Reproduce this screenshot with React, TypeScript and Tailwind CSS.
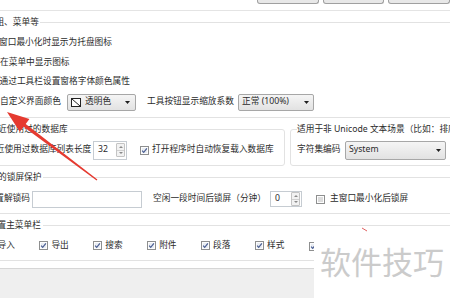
import React from "react";

function Arrow() {
  return (
    <svg width="5" height="3" viewBox="0 0 5 3" className="shrink-0">
      <polygon points="0,0 5,0 2.5,3" fill="#1f1f1f" />
    </svg>
  );
}

function CheckBox({ checked }: { checked?: boolean }) {
  return (
    <svg width="9" height="9" viewBox="0 0 9 9" className="shrink-0">
      <rect x="0.5" y="0.5" width="8" height="8" fill="#fdfdfd" stroke="#8e8f8f" />
      <rect x="2" y="2" width="5" height="5" fill={checked ? "#e9edf3" : "#dcdcdc"} />
      {checked && (
        <path d="M2.1 4.6 L3.7 6.4 L6.9 2.3" fill="none" stroke="#4a5e92" strokeWidth="1.2" />
      )}
    </svg>
  );
}

function Spinner() {
  return (
    <div className="flex flex-col w-[9px] h-[14px] border border-[#c4c4c4] bg-[#f2f2f2] rounded-[1px]">
      <div className="flex-1 flex items-center justify-center border-b border-[#d0d0d0]">
        <svg width="4" height="2" viewBox="0 0 4 2">
          <polygon points="0,2 4,2 2,0" fill="#8a8a8a" />
        </svg>
      </div>
      <div className="flex-1 flex items-center justify-center">
        <svg width="4" height="2" viewBox="0 0 4 2">
          <polygon points="0,0 4,0 2,2" fill="#8a8a8a" />
        </svg>
      </div>
    </div>
  );
}

const combo =
  "flex items-center shrink-0 border border-[#a7a7a7] rounded-[2px] bg-gradient-to-b from-[#f5f5f5] to-[#e2e2e2]";

const menuItems = ["导入", "导出", "搜索", "附件", "段落", "样式"];

export default function App() {
  return (
    <div className="relative w-[450px] h-[298px] overflow-hidden bg-white text-[#2b2b2b] text-[8.7px] font-['Noto_Sans','Noto_Sans_CJK_SC',sans-serif] flex flex-col">
      {/* buttons of the section above */}
      <div className="h-[11px] shrink-0 border-b border-[#e4e4e4] flex gap-[4px] pl-[257px]">
        <div className="w-[85px] h-[4px] border border-t-0 border-[#a0a0a0] rounded-b-[3px] bg-[#e8e8e8]" />
        <div className="w-[85px] h-[4px] border border-t-0 border-[#a0a0a0] rounded-b-[3px] bg-[#e8e8e8]" />
        <div className="w-[85px] h-[4px] border border-t-0 border-[#a0a0a0] rounded-b-[3px] bg-[#e8e8e8]" />
      </div>

      {/* group 1 */}
      <fieldset className="mt-[5px] -ml-[20px] w-[500px] shrink-0 border border-[#e2e2e2] rounded-[3px] pt-[5px] pb-[5px]">
        <legend className="ml-[14.4px] pr-[1px] leading-[12px] whitespace-nowrap">组、菜单等</legend>
        <div className="h-[20px] flex items-center pl-[18px] whitespace-nowrap">窗口最小化时显示为托盘图标</div>
        <div className="h-[19px] flex items-center pl-[19px] whitespace-nowrap">在菜单中显示图标</div>
        <div className="h-[20px] flex items-center pl-[18.5px] whitespace-nowrap">通过工具栏设置窗格字体颜色属性</div>
        <div className="h-[20px] flex items-center pl-[19px] whitespace-nowrap">
          <span className="w-[67px] shrink-0">自定义界面颜色</span>
          <div className={`${combo} w-[69px] h-[17px] pl-[3px] pr-[5px]`}>
            <svg width="10" height="9" viewBox="0 0 10 9" className="shrink-0">
              <rect x="0.5" y="0.5" width="9" height="8" fill="#ffffff" stroke="#222" />
              <line x1="1" y1="1" x2="9" y2="8" stroke="#222" />
            </svg>
            <span className="ml-[4px] flex-1">透明色</span>
            <Arrow />
          </div>
          <span className="ml-[11px] w-[91px] shrink-0">工具按钮显示缩放系数</span>
          <div className={`${combo} w-[76px] h-[17px] pl-[3px] pr-[4px]`}>
            <span className="flex-1">正常 (100%)</span>
            <Arrow />
          </div>
        </div>
      </fieldset>

      {/* group 2 */}
      <div className="mt-[5px] flex shrink-0">
        <fieldset className="-ml-[20px] w-[305px] shrink-0 border border-[#e2e2e2] rounded-[3px] pt-[5px] pb-[5px]">
          <legend className="ml-[8.4px] pr-[2px] leading-[12px] whitespace-nowrap">最近使用过的数据库</legend>
          <div className="h-[20px] flex items-center pl-[19px] whitespace-nowrap">
            <span className="-ml-[13px] w-[106px] shrink-0">最近使用过数据库列表长度</span>
            <div className="flex items-center w-[34px] h-[19px] border border-[#c6ccd2] bg-white pl-[4px] pr-[1px]">
              <span className="flex-1">32</span>
              <Spinner />
            </div>
            <div className="ml-[13px]">
              <CheckBox checked />
            </div>
            <span className="ml-[3px]">打开程序时自动恢复载入数据库</span>
          </div>
        </fieldset>
        <fieldset className="ml-[5px] w-[190px] shrink-0 border border-[#e2e2e2] rounded-[3px] pt-[5px] pb-[5px]">
          <legend className="ml-[6px] pr-[2px] leading-[12px] whitespace-nowrap">适用于非 Unicode 文本场景（比如：排序）</legend>
          <div className="h-[20px] flex items-center pl-[6px] whitespace-nowrap">
            <span className="w-[48px] shrink-0">字符集编码</span>
            <div className={`${combo} w-[101px] h-[19px] pl-[3px] pr-[4px]`}>
              <span className="flex-1">System</span>
              <Arrow />
            </div>
          </div>
        </fieldset>
      </div>

      {/* group 3 */}
      <fieldset className="mt-[5px] -ml-[20px] w-[500px] shrink-0 border border-[#e2e2e2] rounded-[3px] pt-[6px] pb-[4px]">
        <legend className="ml-[17px] pr-[2px] leading-[12px] whitespace-nowrap">的锁屏保护</legend>
        <div className="h-[20px] flex items-center pl-[19px] whitespace-nowrap">
          <span className="-ml-[13.5px] w-[45.5px] shrink-0">设置解锁码</span>
          <div className="w-[110px] h-[17px] shrink-0 border border-[#c6ccd2] bg-white" />
          <span className="ml-[11px] w-[117px] shrink-0">空闲一段时间后锁屏（分钟）</span>
          <div className="flex items-center w-[32px] h-[16px] border border-[#c6ccd2] bg-white pl-[4px] pr-[1px]">
            <span className="flex-1">0</span>
            <Spinner />
          </div>
          <div className="ml-[14px]">
            <CheckBox />
          </div>
          <span className="ml-[5px]">主窗口最小化后锁屏</span>
        </div>
      </fieldset>

      {/* group 4 */}
      <fieldset className="mt-[5px] -ml-[20px] w-[500px] shrink-0 border border-[#e2e2e2] rounded-[3px] pt-[5px] pb-[4px]">
        <legend className="ml-[7.8px] pr-[2px] leading-[12px] whitespace-nowrap">设置主菜单栏</legend>
        <div className="h-[20px] flex items-center pl-[4.5px] whitespace-nowrap">
          {menuItems.map((m) => (
            <div key={m} className="w-[53.9px] shrink-0 flex items-center">
              <CheckBox checked />
              <span className="ml-[3px]">{m}</span>
            </div>
          ))}
          <CheckBox checked />
        </div>
      </fieldset>

      <div className="mt-[7px] flex-1 border-t border-[#d6d6d6] bg-[#efefef]" />

      {/* watermark */}
      <div className="absolute left-[314px] top-[232px] w-[136px] h-[66px] bg-white">
        <div className="mt-[13px] ml-[6px] text-[31px] leading-[31px] text-[#cbcbcb] whitespace-nowrap font-['Noto_Sans_CJK_SC',sans-serif]">
          软件技巧
        </div>
      </div>

      {/* annotation */}
      <svg className="absolute left-0 top-0 pointer-events-none" width="450" height="298" viewBox="0 0 450 298">
        <polygon
          points="7,112 29.4,118.9 25.7,123.9 97.4,179.5 96.6,180.5 23.5,126.7 19.8,131.7"
          fill="#e53a30"
        />
        <line x1="362" y1="228" x2="367" y2="231" stroke="#e06060" strokeWidth="1" />
      </svg>
    </div>
  );
}
